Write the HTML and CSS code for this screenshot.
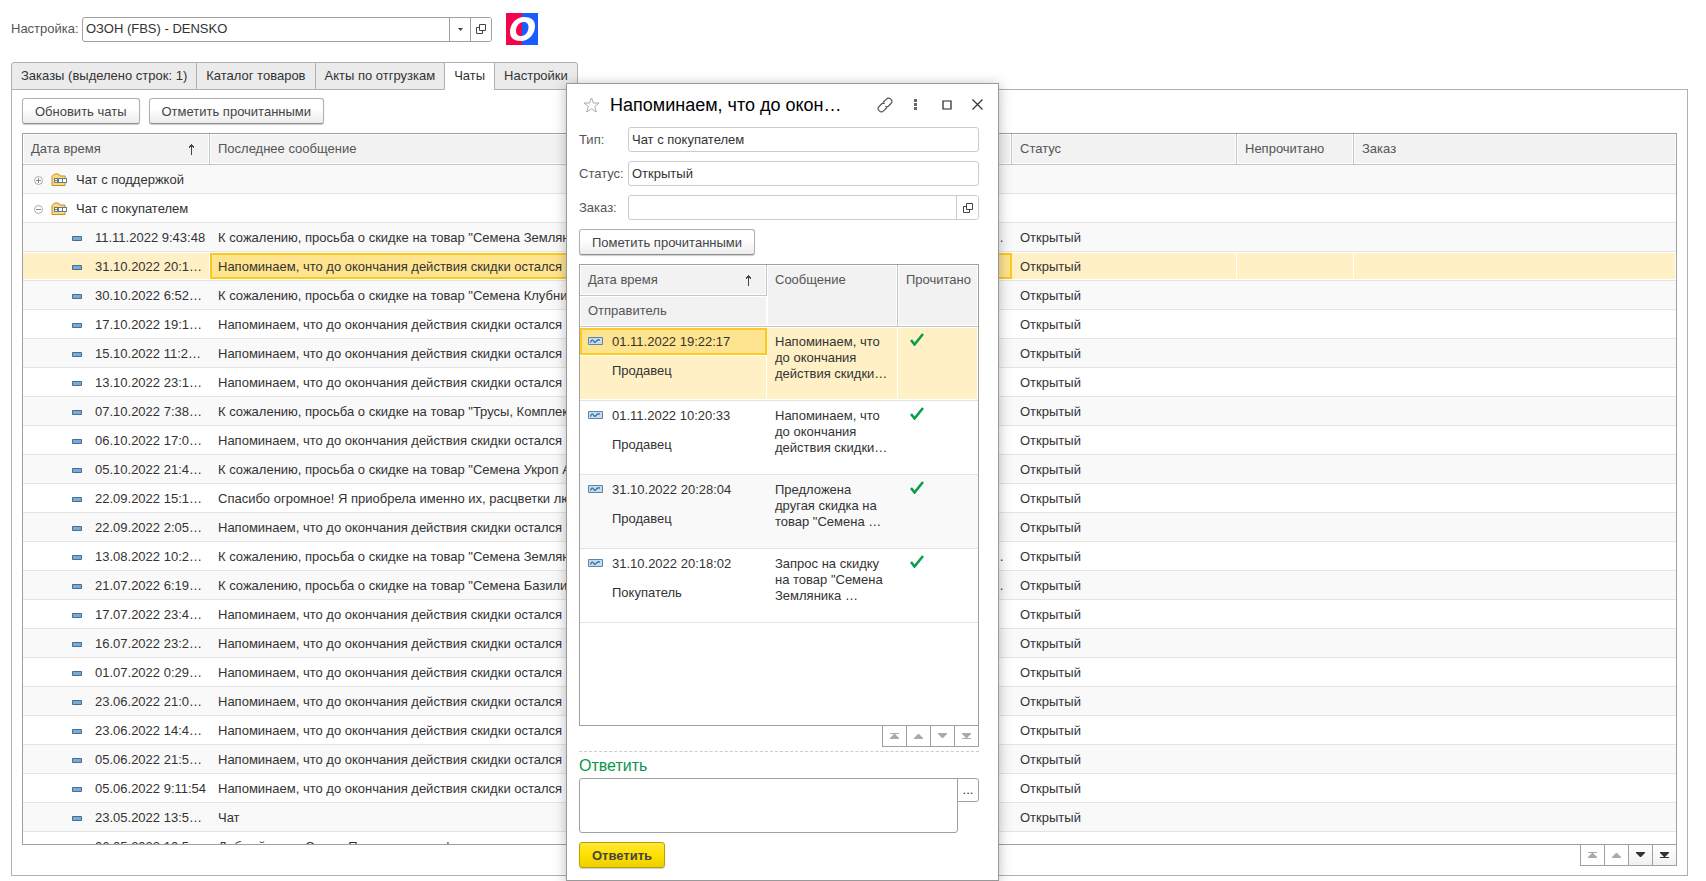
FILE: index.html
```html
<!DOCTYPE html>
<html lang="ru">
<head>
<meta charset="utf-8">
<title>Чаты</title>
<link rel="stylesheet" href="styles.css">
</head>
<body>
<svg class="defs" aria-hidden="true">
  <symbol id="open" viewBox="0 0 10 10"><path d="M3.500.500h6v6h-6zM3.500 3.500h-3v6h6v-3" fill="none" stroke="#444"/></symbol>
  <symbol id="sort" viewBox="0 0 7 11"><path d="M3 1h1v10H3zM3 0h1v1h1v1h1v2H5V3H2v1H1V2h1V1h1z" fill="#444"/></symbol>
  <symbol id="folder" viewBox="0 0 16 14"><path d="M1 3.500L3.500 1h4L9 3h5v9.500H1z" fill="#ffd978" stroke="#c98a2b"/><path d="M3 5h4v5H3zM7 7h9v3H7zM7 5h9v2H7z" fill="#5f7f8f"/><path d="M4 6h2v1H4zM4 8h2v1H4zM8 6h3v3H8zM12 6h3v3h-3z" fill="#fff"/></symbol>
  <symbol id="plus" viewBox="0 0 9 9"><circle cx="4.500" cy="4.500" r="4" fill="#fff" stroke="#aaa"/><path d="M2 4h5v1H2zM4 2h1v5H4z" fill="#888"/></symbol>
  <symbol id="minus" viewBox="0 0 9 9"><circle cx="4.500" cy="4.500" r="4" fill="#fff" stroke="#aaa"/><path d="M2 4h5v1H2z" fill="#888"/></symbol>
  <symbol id="dash" viewBox="0 0 10 5"><path d="M.5.5h9v4h-9z" fill="#79abd6" stroke="#456f8e"/></symbol>
  <symbol id="record" viewBox="0 0 15 8"><path d="M.5.5h14v7H.5z" fill="#c3dcf2" stroke="#6284a0"/><path d="M2.500 5.500c1-3 2-3 3-1.500s1.500 2 3 0 1.500-1 3.500-1" fill="none" stroke="#1e6296" stroke-width="1.200"/></symbol>
  <symbol id="check" viewBox="0 0 14 13"><path d="M1 7l3.500 4.500L13 1" fill="none" stroke="#0a9e4b" stroke-width="2.600"/></symbol>
  <symbol id="first" viewBox="0 0 9 6"><path d="M0 0h9v1H0zM4 1h1l4 4v1H0V5z" fill="currentColor"/></symbol>
  <symbol id="up" viewBox="0 0 9 6"><path d="M4 1h1l4 4v1H0V5z" fill="currentColor"/></symbol>
  <symbol id="down" viewBox="0 0 9 6"><path d="M4 5h1l4-4V0H0v1z" fill="currentColor"/></symbol>
  <symbol id="last" viewBox="0 0 9 6"><path d="M0 5h9v1H0zM4 5h1l4-4V0H0v1z" fill="currentColor"/></symbol>
</svg>

<header class="setup">
  <label for="setup">Настройка:</label>
  <div class="field setup-field">
    <input id="setup" type="text" value="ОЗОН (FBS) - DENSKO">
    <button type="button" class="pick" aria-label="Выбрать"><svg width="5" height="3"><path d="M0 0h5L2.500 3z" fill="#444"/></svg></button>
    <button type="button" class="pick" aria-label="Открыть"><svg width="10" height="10"><use href="#open"/></svg></button>
  </div>
  <svg class="logo" width="32" height="32" viewBox="0 0 32 32"><path d="M0 0h16v32H0z" fill="#f1054f"/><path d="M16 0h16v32H16z" fill="#1b5cff"/><path fill-rule="evenodd" d="M18 4c7 0 11 3 11 9 0 8-6 15-14 15C8 28 4 25 4 19 4 11 10 4 18 4zm-.5 5C13 9 10 13.500 10 18c0 3.500 2 5 5 5 5 0 7.500-4.500 7.500-9 0-3.500-2-5-5-5z" fill="#fff"/></svg>
</header>

<nav class="tabs">
  <button type="button" class="tab">Заказы (выделено строк: 1)</button>
  <button type="button" class="tab">Каталог товаров</button>
  <button type="button" class="tab">Акты по отгрузкам</button>
  <button type="button" class="tab current">Чаты</button>
  <button type="button" class="tab">Настройки</button>
</nav>

<main class="pane">
  <div class="toolbar">
    <button type="button" class="btn">Обновить чаты</button>
    <button type="button" class="btn">Отметить прочитанными</button>
  </div>
  <div class="grid">
    <table class="chats">
      <colgroup><col class="c-date"><col><col class="c-status"><col class="c-unread"><col class="c-order"></colgroup>
      <thead><tr>
        <th><span class="sorted">Дата время <svg width="7" height="11"><use href="#sort"/></svg></span></th>
        <th>Последнее сообщение</th><th>Статус</th><th>Непрочитано</th><th>Заказ</th>
      </tr></thead>
      <tbody>
        <tr><td colspan="5"><span class="group"><button type="button" class="toggle" aria-label="Развернуть"><svg width="9" height="9"><use href="#plus"/></svg></button><svg width="16" height="14"><use href="#folder"/></svg>Чат с поддержкой</span></td></tr>
        <tr><td colspan="5"><span class="group"><button type="button" class="toggle" aria-label="Свернуть"><svg width="9" height="9"><use href="#minus"/></svg></button><svg width="16" height="14"><use href="#folder"/></svg>Чат с покупателем</span></td></tr>
        <tr><td><span class="leaf"><svg width="10" height="5"><use href="#dash"/></svg>11.11.2022 9:43:48</span></td><td><span class="cut"><span>К сожалению, просьба о скидке на товар "Семена Земляника" отклонена</span><span>…</span></span></td><td>Открытый</td><td></td><td></td></tr>
        <tr class="selected"><td><span class="leaf"><svg width="10" height="5"><use href="#dash"/></svg>31.10.2022 20:1…</span></td><td class="active">Напоминаем, что до окончания действия скидки остался 1 день</td><td>Открытый</td><td></td><td></td></tr>
        <tr><td><span class="leaf"><svg width="10" height="5"><use href="#dash"/></svg>30.10.2022 6:52…</span></td><td>К сожалению, просьба о скидке на товар "Семена Клубника" отклонена</td><td>Открытый</td><td></td><td></td></tr>
        <tr><td><span class="leaf"><svg width="10" height="5"><use href="#dash"/></svg>17.10.2022 19:1…</span></td><td>Напоминаем, что до окончания действия скидки остался 1 день</td><td>Открытый</td><td></td><td></td></tr>
        <tr><td><span class="leaf"><svg width="10" height="5"><use href="#dash"/></svg>15.10.2022 11:2…</span></td><td>Напоминаем, что до окончания действия скидки остался 1 день</td><td>Открытый</td><td></td><td></td></tr>
        <tr><td><span class="leaf"><svg width="10" height="5"><use href="#dash"/></svg>13.10.2022 23:1…</span></td><td>Напоминаем, что до окончания действия скидки остался 1 день</td><td>Открытый</td><td></td><td></td></tr>
        <tr><td><span class="leaf"><svg width="10" height="5"><use href="#dash"/></svg>07.10.2022 7:38…</span></td><td>К сожалению, просьба о скидке на товар "Трусы, Комплект" отклонена</td><td>Открытый</td><td></td><td></td></tr>
        <tr><td><span class="leaf"><svg width="10" height="5"><use href="#dash"/></svg>06.10.2022 17:0…</span></td><td>Напоминаем, что до окончания действия скидки остался 1 день</td><td>Открытый</td><td></td><td></td></tr>
        <tr><td><span class="leaf"><svg width="10" height="5"><use href="#dash"/></svg>05.10.2022 21:4…</span></td><td>К сожалению, просьба о скидке на товар "Семена Укроп Аллигатор" отклонена</td><td>Открытый</td><td></td><td></td></tr>
        <tr><td><span class="leaf"><svg width="10" height="5"><use href="#dash"/></svg>22.09.2022 15:1…</span></td><td>Спасибо огромное! Я приобрела именно их, расцветки любимые</td><td>Открытый</td><td></td><td></td></tr>
        <tr><td><span class="leaf"><svg width="10" height="5"><use href="#dash"/></svg>22.09.2022 2:05…</span></td><td>Напоминаем, что до окончания действия скидки остался 1 день</td><td>Открытый</td><td></td><td></td></tr>
        <tr><td><span class="leaf"><svg width="10" height="5"><use href="#dash"/></svg>13.08.2022 10:2…</span></td><td><span class="cut"><span>К сожалению, просьба о скидке на товар "Семена Земляника" отклонена</span><span>…</span></span></td><td>Открытый</td><td></td><td></td></tr>
        <tr><td><span class="leaf"><svg width="10" height="5"><use href="#dash"/></svg>21.07.2022 6:19…</span></td><td><span class="cut"><span>К сожалению, просьба о скидке на товар "Семена Базилик" отклонена</span><span>…</span></span></td><td>Открытый</td><td></td><td></td></tr>
        <tr><td><span class="leaf"><svg width="10" height="5"><use href="#dash"/></svg>17.07.2022 23:4…</span></td><td>Напоминаем, что до окончания действия скидки остался 1 день</td><td>Открытый</td><td></td><td></td></tr>
        <tr><td><span class="leaf"><svg width="10" height="5"><use href="#dash"/></svg>16.07.2022 23:2…</span></td><td>Напоминаем, что до окончания действия скидки остался 1 день</td><td>Открытый</td><td></td><td></td></tr>
        <tr><td><span class="leaf"><svg width="10" height="5"><use href="#dash"/></svg>01.07.2022 0:29…</span></td><td>Напоминаем, что до окончания действия скидки остался 1 день</td><td>Открытый</td><td></td><td></td></tr>
        <tr><td><span class="leaf"><svg width="10" height="5"><use href="#dash"/></svg>23.06.2022 21:0…</span></td><td>Напоминаем, что до окончания действия скидки остался 1 день</td><td>Открытый</td><td></td><td></td></tr>
        <tr><td><span class="leaf"><svg width="10" height="5"><use href="#dash"/></svg>23.06.2022 14:4…</span></td><td>Напоминаем, что до окончания действия скидки остался 1 день</td><td>Открытый</td><td></td><td></td></tr>
        <tr><td><span class="leaf"><svg width="10" height="5"><use href="#dash"/></svg>05.06.2022 21:5…</span></td><td>Напоминаем, что до окончания действия скидки остался 1 день</td><td>Открытый</td><td></td><td></td></tr>
        <tr><td><span class="leaf"><svg width="10" height="5"><use href="#dash"/></svg>05.06.2022 9:11:54</span></td><td>Напоминаем, что до окончания действия скидки остался 1 день</td><td>Открытый</td><td></td><td></td></tr>
        <tr><td><span class="leaf"><svg width="10" height="5"><use href="#dash"/></svg>23.05.2022 13:5…</span></td><td>Чат</td><td>Открытый</td><td></td><td></td></tr>
        <tr><td><span class="leaf"><svg width="10" height="5"><use href="#dash"/></svg>06.05.2022 10:5…</span></td><td>Добрый день, Ольга. Посмотрите, информацию</td><td></td><td></td><td></td></tr>
      </tbody>
    </table>
  </div>
  <div class="pager">
    <button type="button" disabled aria-label="В начало"><svg width="9" height="6"><use href="#first"/></svg></button>
    <button type="button" disabled aria-label="Вверх"><svg width="9" height="6"><use href="#up"/></svg></button>
    <button type="button" aria-label="Вниз"><svg width="9" height="6"><use href="#down"/></svg></button>
    <button type="button" aria-label="В конец"><svg width="9" height="6"><use href="#last"/></svg></button>
  </div>
</main>

<section class="dialog" role="dialog" aria-labelledby="dialog-title">
  <div class="titlebar">
    <button type="button" class="icon" aria-label="В избранное"><svg width="17" height="16" viewBox="0 0 17 16"><path d="M8.500 1l2 5h5.500l-4.300 3.500 1.600 5.500-4.800-3.200L3.700 15l1.600-5.500L1 6h5.500z" fill="none" stroke="#aaa"/></svg></button>
    <h1 id="dialog-title">Напоминаем, что до окон…</h1>
    <button type="button" class="icon" aria-label="Получить ссылку"><svg width="16" height="16" viewBox="0 0 16 16"><g fill="none" stroke="#555" stroke-width="1.200"><path d="M6 5.500l3.700-3.700a2.600 2.600 0 0 1 3.700 0l.8.8a2.600 2.600 0 0 1 0 3.700L11.500 9a2.600 2.600 0 0 1-3.200.3"/><path d="M10 10.500l-3.700 3.700a2.600 2.600 0 0 1-3.700 0l-.8-.8a2.600 2.600 0 0 1 0-3.700L4.500 7a2.600 2.600 0 0 1 3.200-.3"/></g></svg></button>
    <button type="button" class="icon" aria-label="Ещё"><svg width="3" height="11"><path d="M0 0h3v3H0zM0 4h3v3H0zM0 8h3v3H0z" fill="#666"/></svg></button>
    <button type="button" class="icon" aria-label="Развернуть окно"><svg width="10" height="10"><path d="M1 1h8v8H1z" fill="none" stroke="#222" stroke-width="1.200"/></svg></button>
    <button type="button" class="icon" aria-label="Закрыть"><svg width="11" height="11"><path d="M.5.5l10 10M10.500.5l-10 10" stroke="#333" stroke-width="1.200"/></svg></button>
  </div>
  <div class="form">
    <label for="type">Тип:</label>
    <div class="field soft"><input id="type" type="text" value="Чат с покупателем" readonly></div>
    <label for="status">Статус:</label>
    <div class="field soft"><input id="status" type="text" value="Открытый" readonly></div>
    <label for="order">Заказ:</label>
    <div class="field soft"><input id="order" type="text" readonly><button type="button" class="pick" aria-label="Открыть заказ"><svg width="10" height="10"><use href="#open"/></svg></button></div>
  </div>
  <button type="button" class="btn mark">Пометить прочитанными</button>
  <div class="grid">
    <table class="messages">
      <colgroup><col class="m-date"><col class="m-text"><col></colgroup>
      <thead>
        <tr><th><span class="sorted">Дата время <svg width="7" height="11"><use href="#sort"/></svg></span></th><th rowspan="2">Сообщение</th><th rowspan="2">Прочитано</th></tr>
        <tr><th>Отправитель</th></tr>
      </thead>
      <tbody class="selected">
        <tr><td class="active when"><svg width="15" height="8"><use href="#record"/></svg>01.11.2022 19:22:17</td><td rowspan="2" class="text">Напоминаем, что<br>до окончания<br>действия скидки…</td><td rowspan="2" class="read"><svg width="14" height="13" role="img" aria-label="Прочитано"><use href="#check"/></svg></td></tr>
        <tr><td class="who">Продавец</td></tr>
      </tbody>
      <tbody>
        <tr><td class="when"><svg width="15" height="8"><use href="#record"/></svg>01.11.2022 10:20:33</td><td rowspan="2" class="text">Напоминаем, что<br>до окончания<br>действия скидки…</td><td rowspan="2" class="read"><svg width="14" height="13" role="img" aria-label="Прочитано"><use href="#check"/></svg></td></tr>
        <tr><td class="who">Продавец</td></tr>
      </tbody>
      <tbody class="odd">
        <tr><td class="when"><svg width="15" height="8"><use href="#record"/></svg>31.10.2022 20:28:04</td><td rowspan="2" class="text">Предложена<br>другая скидка на<br>товар "Семена …</td><td rowspan="2" class="read"><svg width="14" height="13" role="img" aria-label="Прочитано"><use href="#check"/></svg></td></tr>
        <tr><td class="who">Продавец</td></tr>
      </tbody>
      <tbody>
        <tr><td class="when"><svg width="15" height="8"><use href="#record"/></svg>31.10.2022 20:18:02</td><td rowspan="2" class="text">Запрос на скидку<br>на товар "Семена<br>Земляника …</td><td rowspan="2" class="read"><svg width="14" height="13" role="img" aria-label="Прочитано"><use href="#check"/></svg></td></tr>
        <tr><td class="who">Покупатель</td></tr>
      </tbody>
    </table>
  </div>
  <div class="pager">
    <button type="button" disabled aria-label="В начало"><svg width="9" height="6"><use href="#first"/></svg></button>
    <button type="button" disabled aria-label="Вверх"><svg width="9" height="6"><use href="#up"/></svg></button>
    <button type="button" disabled aria-label="Вниз"><svg width="9" height="6"><use href="#down"/></svg></button>
    <button type="button" disabled aria-label="В конец"><svg width="9" height="6"><use href="#last"/></svg></button>
  </div>
  <div class="reply">
    <label for="reply">Ответить</label>
    <div class="reply-row"><textarea id="reply"></textarea><button type="button" class="more" aria-label="Открыть редактор">...</button></div>
    <button type="button" class="btn primary">Ответить</button>
  </div>
</section>
</body>
</html>
```
FILE: styles.css
```css
* { box-sizing: border-box; }
html, body { height: 100%; }
body {
  margin: 0;
  padding: 13px 18px 5px 11px;
  display: flex;
  flex-direction: column;
  overflow: hidden;
  position: relative;
  background: #fff;
  color: #333;
  font: 13px/16px "Liberation Sans", Arial, sans-serif;
}
button, input, textarea { font: inherit; color: inherit; margin: 0; }
button { padding: 0; background: #fff; border: 0; }
svg { display: block; flex: none; }
.defs { position: absolute; width: 0; height: 0; }
label { color: #555; }

.setup { display: flex; align-items: center; }
.setup label { width: 71px; }
.logo { margin-left: 14px; }

.field {
  display: flex;
  height: 25px;
  border: 1px solid #a0a0a0;
  border-radius: 3px;
  overflow: hidden;
}
.field input {
  flex: 1;
  min-width: 0;
  border: 0;
  padding: 0 3px;
  outline: 0;
  background: transparent;
}
.setup-field { width: 410px; }
.pick {
  width: 21px;
  border-left: 1px solid #a0a0a0;
  display: flex;
  align-items: center;
  justify-content: center;
}
.soft, .soft .pick { border-color: #ccc; }

.tabs {
  position: relative;
  z-index: 1;
  align-self: flex-start;
  display: flex;
  margin-top: 17px;
}
.tab {
  height: 28px;
  padding: 0 9px;
  margin-right: -1px;
  background: #ebebeb;
  border: 1px solid #b0b0b0;
}
.tab:first-child { border-top-left-radius: 3px; }
.tab:last-child { border-top-right-radius: 3px; }
.current { background: #fff; border-bottom-color: #fff; }

.pane {
  flex: 1;
  min-height: 0;
  margin-top: -1px;
  padding: 8px 10px 9px;
  border: 1px solid #b0b0b0;
  display: flex;
  flex-direction: column;
}
.toolbar { display: flex; gap: 9px; margin-bottom: 9px; }
.btn {
  height: 26px;
  padding: 1px 12px 0;
  border: 1px solid #b0b0b0;
  border-bottom-color: #8e8e8e;
  border-radius: 3px;
  background: linear-gradient(#fff 40%, #ececec);
  box-shadow: 0 1px 1px #ccc;
  color: #444;
}

.grid { flex: 1; min-height: 0; overflow: hidden; border: 1px solid #a0a0a0; }
table { width: 100%; table-layout: fixed; border-collapse: separate; border-spacing: 0; }
th, td { text-align: left; font-weight: normal; padding: 0 8px; white-space: nowrap; overflow: hidden; text-overflow: ellipsis; }
th {
  height: 31px;
  color: #555;
  background: #f2f2f2;
  border: solid #c4c4c4;
  border-width: 0 1px 1px 0;
  box-shadow: inset 0 0 0 1px #fff;
}
th:last-child { border-right: 0; }
.sorted { display: flex; align-items: center; justify-content: space-between; padding-right: 6px; }
.c-date { width: 187px; }
.c-status { width: 225px; }
.c-unread { width: 117px; }
.c-order { width: 322px; }
.chats td { height: 29px; padding-top: 2px; border-bottom: 1px solid #e4e4e4; }
.chats tbody tr:nth-child(odd) td { background: #f9f9f9; }
.group, .leaf { display: flex; align-items: center; }
.group { gap: 9px; padding-left: 3px; }
.toggle { background: transparent; margin-right: -1px; }
.leaf { gap: 13px; padding-left: 41px; margin-right: -8px; }
.cut { display: flex; justify-content: space-between; }
.selected td, .chats tbody tr.selected td {
  background: #fff0c5;
  box-shadow: inset 0 1px #fff, inset 0 -1px #fff, inset -1px 0 #fff;
}
.selected td.active, .chats tbody tr.selected td.active {
  background: #ffe48f;
  box-shadow: inset 0 1px #fff, inset 0 -1px #fff, inset 2px 0 #fbc91f, inset -2px 0 #fbc91f, inset 0 3px #fbc91f, inset 0 -3px #fbc91f;
}

.pager { display: flex; align-self: flex-end; margin-top: -1px; }
.pager button {
  width: 25px;
  height: 22px;
  border: 1px solid #a0a0a0;
  margin-left: -1px;
  display: flex;
  align-items: center;
  justify-content: center;
  color: #333;
  background: linear-gradient(#fff, #f0f0f0);
}
.pager button:disabled { color: #aaa; background: #fff; }

.dialog {
  position: absolute;
  z-index: 2;
  top: 83px;
  bottom: 0;
  left: 566px;
  width: 433px;
  padding: 0 19px 12px 12px;
  display: flex;
  flex-direction: column;
  background: #fff;
  border: 1px solid #999;
  box-shadow: 0 2px 12px rgba(0, 0, 0, .28);
}
.titlebar { height: 43px; display: flex; align-items: center; margin-right: -7px; padding: 0 0 2px 4px; }
.titlebar h1 { flex: 1; margin: 0 0 0 10px; font-size: 18px; line-height: 24px; font-weight: normal; color: #000; white-space: nowrap; }
.icon { min-width: 17px; display: flex; justify-content: center; background: transparent; }
.icon + .icon { margin-left: 14px; }
.form { display: grid; grid-template-columns: 49px 1fr; row-gap: 9px; align-items: center; }
.soft .pick { width: 22px; }
.mark { align-self: flex-start; margin: 9px 0; }
.m-date { width: 187px; }
.m-text { width: 131px; }
.messages th { overflow: visible; }
.messages th[rowspan] { vertical-align: top; padding-top: 7px; }
.messages td { vertical-align: top; padding-top: 7px; }
.messages .when { height: 29px; display: flex; gap: 9px; align-items: flex-start; }
.when svg { margin-top: 3px; }
.messages .who { height: 45px; padding-left: 32px; border-bottom: 1px solid #e4e4e4; }
.messages .selected .who { box-shadow: inset 0 -1px #fff, inset -1px 0 #fff; }
.messages .text, .messages .read { border-bottom: 1px solid #e4e4e4; }
.messages .read { padding: 6px 0 0 12px; }
.odd td { background: #f9f9f9; }

.reply { margin-top: 4px; border-top: 1px dashed #ccc; display: flex; flex-direction: column; }
.reply label { font-size: 16px; line-height: 20px; color: #0a9648; margin: 4px 0 2px; }
.reply-row { display: flex; align-items: flex-start; }
textarea { flex: 1; height: 55px; resize: none; border: 1px solid #a0a0a0; border-radius: 3px 0 3px 3px; }
.more { width: 22px; height: 24px; margin-left: -1px; border: 1px solid #a0a0a0; border-radius: 0 3px 3px 0; }
.primary {
  align-self: flex-start;
  margin-top: 9px;
  border-color: #b8a000;
  background: linear-gradient(#ffe83a, #ffe000 50%, #ecd000);
  font-weight: bold;
}
```
